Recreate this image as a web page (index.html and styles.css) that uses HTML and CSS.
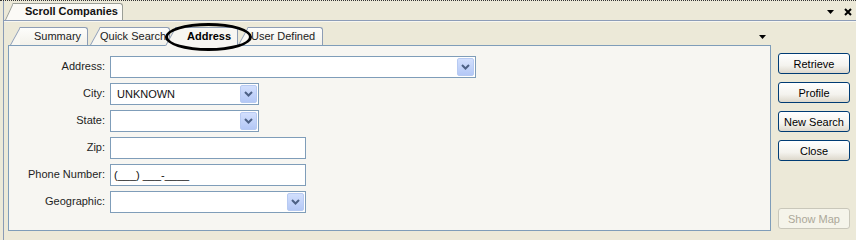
FILE: index.html
```html
<!DOCTYPE html>
<html lang="en">
<head>
  <meta charset="UTF-8" />
  <title>Scroll Companies</title>
  <link rel="stylesheet" href="styles.css">
</head>
<body>
  <div class="dots"></div>
  <div class="window">
    <div class="titlebar">
      <div class="doc-tab"><span>Scroll Companies</span></div>
      <div class="win-ctrls">
        <svg width="7" height="4" viewBox="0 0 7 4"><path d="M0 0h7L3.5 4z" fill="#000"/></svg>
        <svg width="8" height="8" viewBox="0 0 8 8"><path d="M1 1l6 6M7 1l-6 6" stroke="#000" stroke-width="2"/></svg>
      </div>
    </div>
    <div class="frame">
      <div class="main">
        <div class="tabstrip">
          <div class="tab tab-summary"><span>Summary</span></div>
          <div class="tab tab-quick"><span>Quick Search</span></div>
          <div class="tab tab-address active"><span>Address</span></div>
          <div class="tab tab-user"><span>User Defined</span></div>
          <svg class="strip-arrow" width="7" height="4" viewBox="0 0 7 4"><path d="M0 0h7L3.5 4z" fill="#000"/></svg>
          <div class="highlight"></div>
        </div>
        <div class="panel">
          <div class="form">
            <div class="row">
              <label>Address:</label>
              <div class="field w-long">
                <span class="combo-btn"><svg width="9" height="6" viewBox="0 0 9 6"><path d="M1 1l3.5 3.5L8 1" fill="none" stroke="#4D6185" stroke-width="2"/></svg></span>
              </div>
            </div>
            <div class="row">
              <label>City:</label>
              <div class="field w-short">
                <span>UNKNOWN</span>
                <span class="combo-btn"><svg width="9" height="6" viewBox="0 0 9 6"><path d="M1 1l3.5 3.5L8 1" fill="none" stroke="#4D6185" stroke-width="2"/></svg></span>
              </div>
            </div>
            <div class="row">
              <label>State:</label>
              <div class="field w-short">
                <span class="combo-btn"><svg width="9" height="6" viewBox="0 0 9 6"><path d="M1 1l3.5 3.5L8 1" fill="none" stroke="#4D6185" stroke-width="2"/></svg></span>
              </div>
            </div>
            <div class="row">
              <label>Zip:</label>
              <div class="field w-mid"></div>
            </div>
            <div class="row">
              <label>Phone Number:</label>
              <div class="field w-mid phone"><span>(___) ___-____</span></div>
            </div>
            <div class="row">
              <label>Geographic:</label>
              <div class="field w-mid">
                <span class="combo-btn"><svg width="9" height="6" viewBox="0 0 9 6"><path d="M1 1l3.5 3.5L8 1" fill="none" stroke="#4D6185" stroke-width="2"/></svg></span>
              </div>
            </div>
          </div>
        </div>
      </div>
      <div class="side">
        <button class="btn">Retrieve</button>
        <button class="btn">Profile</button>
        <button class="btn">New Search</button>
        <button class="btn">Close</button>
        <button class="btn btn-map" disabled>Show Map</button>
      </div>
    </div>
  </div>
</body>
</html>
```

FILE: styles.css
```css
body {
  margin: 0;
  background: #ECE9D8;
  font-family: "Liberation Sans", Arial, sans-serif;
  font-size: 11px;
  color: #000;
  width: 856px;
  height: 240px;
  overflow: hidden;
}
.dots {
  height: 0;
  border-top: 1px dotted #333;
}
.window {
  margin-left: 3px;
  border-left: 1px solid #8A9BB5;
  height: 239px;
}
.titlebar {
  display: flex;
  align-items: flex-end;
  height: 19px;
  padding-left: 1px;
}
.doc-tab {
  position: relative;
  z-index: 0;
  width: 118px;
  height: 17px;
  box-sizing: border-box;
  padding-left: 20px;
  line-height: 17px;
  font-weight: bold;
  color: #111;
}
.doc-tab::before,
.doc-tab::after,
.tab::before,
.tab::after {
  content: '';
  position: absolute;
  top: 0;
  bottom: 0;
  z-index: -1;
  box-sizing: border-box;
}
.doc-tab::before {
  left: 0;
  width: 24px;
  border-left: 1px solid #9A9E96;
  border-top: 1px solid #9A9E96;
  background: #FBFAF6;
  transform-origin: 0 100%;
  transform: skewX(-25deg);
}
.doc-tab::after {
  left: 8px;
  right: 0;
  border-top: 1px solid #9A9E96;
  border-right: 1px solid #9A9E96;
  border-top-right-radius: 3px;
  background: #FBFAF6;
}
.win-ctrls {
  margin-left: auto;
  align-self: center;
  display: flex;
  align-items: center;
  gap: 10px;
  padding-right: 4px;
  margin-top: 2px;
}
.frame {
  display: flex;
  border-top: 1px solid #8D9DB8;
  box-shadow: inset 0 1px 0 #F8F7F0;
}
.main {
  padding-left: 4px;
  width: 763px;
}
.tabstrip {
  position: relative;
  z-index: 1;
  display: flex;
  align-items: flex-end;
  height: 24px;
  padding-left: 2px;
}
.tab {
  position: relative;
  height: 18px;
  box-sizing: border-box;
  line-height: 18px;
  color: #222;
  white-space: nowrap;
}
.tab::before {
  left: 0;
  width: 24px;
  border-left: 1px solid #8D9DB5;
  border-top: 1px solid #8D9DB5;
  background: #F9F8F3;
  transform-origin: 0 100%;
  transform: skewX(-29deg);
}
.tab::after {
  left: 10px;
  right: 0;
  border-top: 1px solid #8D9DB5;
  border-right: 1px solid #8D9DB5;
  border-top-right-radius: 3px;
  background: linear-gradient(#FDFDFB, #F3F1EA);
}
.tab-summary {
  z-index: 4;
  width: 78px;
  padding-left: 24px;
}
.tab-quick {
  z-index: 3;
  width: 80px;
  margin-left: 2px;
  padding-left: 10px;
}
.tab-address {
  width: 73px;
  margin-left: -5px;
  padding-left: 22px;
  font-weight: bold;
  color: #000;
}
.tab-user {
  z-index: 1;
  width: 85px;
  padding-left: 13px;
}
.tab.active {
  z-index: 5;
  height: 19px;
  margin-bottom: -1px;
}
.tab.active::before,
.tab.active::after {
  background: #F7F6F2;
}
.tab.active::before {
  border-bottom: 0;
}
.strip-arrow {
  margin-left: auto;
  margin-right: 5px;
  margin-bottom: 6px;
}
.highlight {
  position: absolute;
  left: 157px;
  top: 2px;
  width: 87px;
  height: 28px;
  box-sizing: border-box;
  border: 3px solid #000;
  border-radius: 50%;
  z-index: 10;
}
.panel {
  height: 186px;
  box-sizing: border-box;
  border: 1px solid #7F9DB9;
  background: #F7F6F2;
}
.form {
  display: flex;
  flex-direction: column;
  gap: 5px;
  padding-top: 10px;
}
.row {
  display: grid;
  grid-template-columns: 96px auto;
  column-gap: 5px;
  align-items: center;
  height: 22px;
}
.row label {
  text-align: right;
  color: #1E1E1E;
  margin-top: -2px;
}
.field {
  height: 22px;
  box-sizing: border-box;
  border: 1px solid #7F9DB9;
  background: #fff;
  display: flex;
  align-items: center;
  padding-left: 6px;
  color: #111;
}
.field.phone {
  padding-left: 3px;
}
.w-long { width: 366px; }
.w-short { width: 149px; }
.w-mid { width: 196px; }
.combo-btn {
  margin-left: auto;
  margin-right: 1px;
  width: 17px;
  height: 18px;
  box-sizing: border-box;
  border: 1px solid #B7CAF2;
  border-radius: 2px;
  background: linear-gradient(#D2DFFD, #B4C8F6);
  display: flex;
  align-items: center;
  justify-content: center;
}
.side {
  display: flex;
  flex-direction: column;
  gap: 8px;
  margin-left: 7px;
  padding-top: 32px;
  width: 72px;
}
.btn {
  height: 21px;
  width: 72px;
  padding: 0;
  box-sizing: border-box;
  border: 1px solid #003C74;
  border-radius: 3px;
  background: linear-gradient(#FFFFFF, #F4F3EE 60%, #DDD8CC);
  font-family: "Liberation Sans", Arial, sans-serif;
  font-size: 11px;
  color: #000;
}
.btn-map {
  margin-top: 39px;
  border-color: #C9C7BA;
  background: #F5F4EA;
  color: #ACA899;
}
```
